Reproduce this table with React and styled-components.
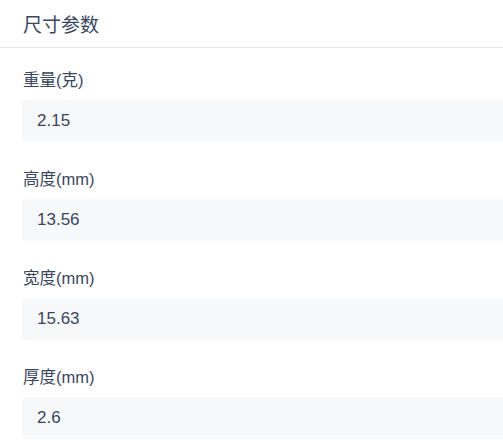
import styled, { createGlobalStyle } from 'styled-components';

const GlobalStyle = createGlobalStyle`
    html, body {
        margin: 0;
        padding: 0;
        background: #fff;
        overflow: hidden;
    }
    body {
        font-family: 'Liberation Sans', 'Noto Sans CJK SC', sans-serif;
        color: #34405a;
    }
`;

const fields = [
    { label: '重量(克)', value: '2.15' },
    { label: '高度(mm)', value: '13.56' },
    { label: '宽度(mm)', value: '15.63' },
    { label: '厚度(mm)', value: '2.6' },
];

const App = () => {
    return (
        <Panel>
            <GlobalStyle />
            <Header>尺寸参数</Header>
            <Body>
                {fields.map((f) => (
                    <Field key={f.label}>
                        <Label>{f.label}</Label>
                        <ValueBox>{f.value}</ValueBox>
                    </Field>
                ))}
            </Body>
        </Panel>
    );
};

export default App;

//Styles
const Panel = styled.div`
    width: 100%;
    min-height: 100vh;
    background: #fff;
`;

const Header = styled.div`
    height: 47px;
    display: flex;
    align-items: center;
    padding: 0 23px;
    font-size: 19px;
    color: #3a4660;
    border-bottom: 1px solid #e6e8eb;
    box-sizing: content-box;
`;

const Body = styled.div`
    padding: 20px 0 0 22px;
    display: flex;
    flex-direction: column;
    gap: 25px;
`;

const Field = styled.div`
    display: flex;
    flex-direction: column;
    gap: 7px;
`;

const Label = styled.div`
    font-size: 16.5px;
    line-height: 25px;
    padding-left: 1px;
    color: #3a4660;
`;

const ValueBox = styled.div`
    height: 42px;
    margin-right: -10px;
    display: flex;
    align-items: center;
    padding-left: 15px;
    background: #f7f8fa;
    border-radius: 4px;
    font-size: 17px;
    color: #3a4660;
`;
